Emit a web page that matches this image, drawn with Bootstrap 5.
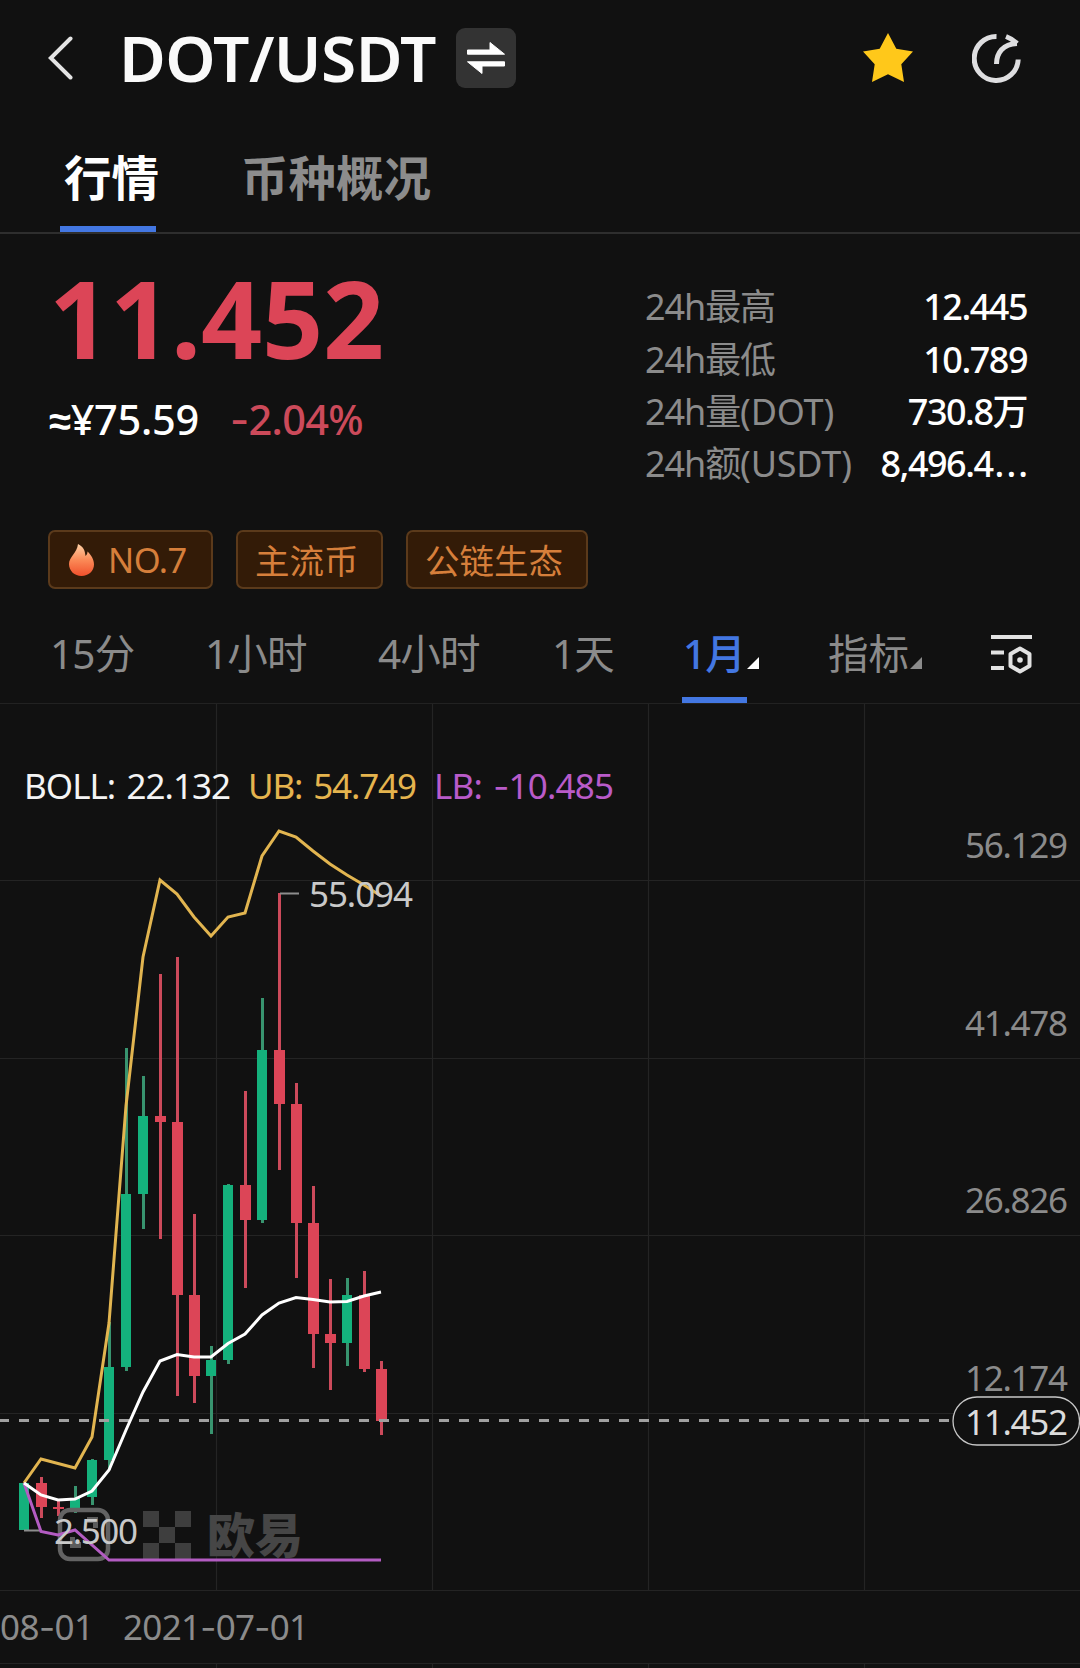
<!DOCTYPE html>
<html lang="zh-CN" data-bs-theme="dark">
<head>
<meta charset="utf-8">
<meta name="viewport" content="width=device-width, initial-scale=1">
<title>DOT/USDT</title>
<link rel="stylesheet" href="https://cdn.jsdelivr.net/npm/bootstrap@5.3.0/dist/css/bootstrap.min.css">
<style>
body{background:#111;color:#fff;font-family:"Noto Sans","Noto Sans CJK SC",sans-serif;width:1080px;height:1668px;overflow:hidden}
svg{display:block;flex:none}
.topbar{height:116px;padding-left:48px;padding-right:59px}
.pair{font-size:64px;font-weight:600;line-height:80px;letter-spacing:-.6px;margin:0 0 0 46px;width:321px;white-space:nowrap;color:#fafafa}
.swap{width:60px;height:60px;background:#333;border-radius:9px;margin-left:16px}
.star{margin-left:auto;margin-right:59px}
.maintabs{height:118px;border-bottom:2px solid #2e2e2e;padding-left:60px;--bs-nav-link-padding-x:0;flex-wrap:nowrap}
.maintabs .nav-link{font-size:47.500px;font-weight:700;line-height:60px;color:#8c8c8c;padding:31.500px 0 0 4px;height:116px;white-space:nowrap}
.maintabs .nav-link.active{color:#fff;border-bottom:6px solid #4377e2;width:96px;margin-right:81px}
.quote{height:296px;padding:0 53px 0 49px}
.last{font-size:107px;font-weight:700;line-height:120px;color:#dc4557;margin-top:24px;letter-spacing:-.2px}
.sub{font-size:41.500px;font-weight:500;line-height:50px;margin-top:16px;white-space:nowrap}
.fiat{letter-spacing:-.3px;width:181px}
.approx{font:700 40px/50px "Liberation Sans",sans-serif}
.chg{color:#cc4a5a;letter-spacing:-.7px}
.dash{font-family:Inter,sans-serif}
.stats{width:382px;margin-top:47px;font-size:36px;line-height:52.700px;white-space:nowrap}
.stats div:last-child{line-height:49px}
.stats dt{font-weight:400;color:#8b8b8b;letter-spacing:-1.100px}
.stats dt span{letter-spacing:-.2px}
.stats dd{font-weight:500;margin:0;letter-spacing:-1.500px}
.stats dd span{letter-spacing:2px;margin-left:2px;margin-right:-3px}
.tags{padding-left:48px;gap:23px}
.chip{height:59px;border:2px solid #5b3a1b;border-radius:7px;background:#331b07;color:#d67f3b;font-size:34.500px;line-height:58px;padding:0 17px;white-space:nowrap}
.periods{height:115px;border-bottom:1px solid #222;padding:25px 48px 0 50px;font-size:40.500px;line-height:80px;color:#8b8b8b;letter-spacing:-.8px;white-space:nowrap}
.period{height:89px;display:flex}
.period.on{color:#4377e2;font-weight:500;width:65px;border-bottom:6px solid #4377e2;padding-left:1px}
.corner{margin-top:43px}
.plot text{font-family:"Noto Sans","Noto Sans CJK SC",sans-serif;font-size:35px}
</style>
<script src="https://cdn.jsdelivr.net/npm/bootstrap@5.3.0/dist/js/bootstrap.bundle.min.js"></script>
</head>
<body>
<header class="topbar d-flex align-items-center">
  <svg width="25" height="46" viewBox="0 0 25 46" fill="none" stroke="#e4e4e4" stroke-width="4"><path d="M22.500 3.500 2.800 23l19.700 19.500" stroke-linecap="round"/></svg>
  <h1 class="pair">DOT/USDT</h1>
  <div class="swap d-flex align-items-center justify-content-center">
    <svg width="40" height="36" viewBox="0 0 40 36" fill="#fff" stroke="#fff" stroke-linejoin="round"><path d="M1.500 10H24V2.500L38.500 14.200H1.500zM38.500 21.800H1.500L16 33.500V26H38.500z"/></svg>
  </div>
  <svg class="star" width="50" height="50" viewBox="0 0 50 50" fill="#ffc81a"><path d="M25 0l8.300 15.800L50 18.500 38.300 31.200 41 49 25 41.300 9 49l2.700-17.800L0 18.500l16.700-2.700z"/></svg>
  <svg width="49" height="50" viewBox="0 0 49 50" fill="none" stroke="#dedee0" stroke-width="5"><path d="M24.500 3.500A22 22 0 1 0 46.200 26.500M24.500 31C24.500 20 31 11 45 10.500M34 3.500C38 5 41.500 7 45 10.500"/></svg>
</header>
<nav class="maintabs nav">
  <a class="nav-link active">行情</a>
  <a class="nav-link">币种概况</a>
</nav>
<section class="quote d-flex justify-content-between">
  <div>
    <div class="last">11.452</div>
    <div class="sub d-flex"><span class="fiat"><span class="approx">≈</span>¥75.59</span><span class="chg"><span class="dash">-</span>2.04%</span></div>
  </div>
  <dl class="stats mb-0">
    <div class="d-flex justify-content-between"><dt>24h最高</dt><dd>12.445</dd></div>
    <div class="d-flex justify-content-between"><dt>24h最低</dt><dd>10.789</dd></div>
    <div class="d-flex justify-content-between"><dt>24h量<span>(DOT)</span></dt><dd>730.8万</dd></div>
    <div class="d-flex justify-content-between"><dt>24h额<span>(USDT)</span></dt><dd>8,496.4<span>...</span></dd></div>
  </dl>
</section>
<section class="tags d-flex">
  <span class="chip d-flex align-items-center" style="width:165px;padding-left:19px">
    <svg width="25" height="32" viewBox="0 0 25 32"><defs><linearGradient id="fl" x1="0" y1="0" x2="0" y2="1"><stop offset="0" stop-color="#ffd0a4"/><stop offset=".5" stop-color="#fb8a57"/><stop offset="1" stop-color="#f0502c"/></linearGradient></defs><path fill="url(#fl)" d="M9 0C15 3 16 7 16.500 12 18 11 18.500 9 18.500 7.500 22 11 25 15 25 20.500 25 27 19.500 32 12.500 32S0 27 0 20C0 13 8 9 9 0z"/></svg>
    <span style="margin-left:14px;letter-spacing:-.5px">NO.7</span>
  </span>
  <span class="chip" style="width:147px">主流币</span>
  <span class="chip ms-0" style="width:182px">公链生态</span>
</section>
<nav class="periods d-flex">
  <div class="period" style="width:155px">15分</div>
  <div class="period" style="width:173px">1小时</div>
  <div class="period" style="width:174px">4小时</div>
  <div class="period" style="width:130px">1天</div>
  <div class="period on">1月</div>
  <svg class="corner" width="12" height="12"><path d="M12 0V12H0z" fill="#fff"/></svg>
  <div class="period" style="margin-left:69px;width:82px;letter-spacing:0">指标</div>
  <svg class="corner" width="12" height="12"><path d="M12 0V12H0z" fill="#8b8b8b"/></svg>
  <svg class="ms-auto" style="margin-top:20px" width="41" height="40" viewBox="0 0 41 40" fill="none" stroke="#e2e2e2" stroke-width="4"><path d="M0 3H41M0 18.500H13M0 34H13"/><path d="M29 14.500 38.500 20V32L29 37.500 19.500 32V20z" stroke-linejoin="round"/><circle cx="29" cy="26" r="2.800" fill="#e2e2e2" stroke="none"/></svg>
</nav>
<svg class="plot" width="1080" height="964" viewBox="0 704 1080 964">
  <path stroke="#242424" stroke-width="1.200" d="M216.500 704V1590M432.500 704V1590M648.500 704V1590M864.500 704V1590M0 880.500H1080M0 1058.500H1080M0 1235.500H1080M0 1413.500H1080M0 1590.500H1080M0 1663.500H1080M216.500 1664V1668M432.500 1664V1668M648.500 1664V1668M864.500 1664V1668"/>
  <g fill="#fff" style="word-spacing:3px">
    <text x="24" y="799" textLength="207" fill="#f4f4f4">BOLL: 22.132</text>
    <text x="248" y="799" textLength="169" fill="#e5b44e">UB: 54.749</text>
    <text x="434" y="799" textLength="180" fill="#b95bc9">LB: <tspan font-family="Inter">-</tspan>10.485</text>
  </g>
  <g id="candles"></g>
  <path d="M280 893.500H299M24 1530.500H40" stroke="#8d8d8d" stroke-width="2"/>
  <rect x="60" y="1510" width="48" height="49" rx="10" fill="none" stroke="#636363" stroke-width="4.500"/>
  <path d="M70 1537h5v5h6v6H70zM98 1528h-5v-5h-6v-6h11z" fill="#5c5c5c"/>
  <path fill="#3e3e3e" d="M143 1511h16v16h-16zM175 1511h16v16h-16zM159 1527h16v16h-16zM143 1543h16v16h-16zM175 1543h16v16h-16z"/>
  <text x="207" y="1553" textLength="96" style="font-size:48px;font-weight:900;font-family:'Noto Sans CJK SC',sans-serif" fill="#464646">欧易</text>
  <path d="M-1 1420.500H952" stroke="#a0a0a0" stroke-width="2.800" stroke-dasharray="10 10"/>
  <g fill="none" stroke-width="3">
    <path stroke="#e2b550" d="M24 1483 41 1459 75 1468 92 1437 109 1323 126 1106 143 957 160 880 177 894 194 917 211 936 228 917 245 913 262 856 279 831 296 837 313 851 330 864 347 875 364 885 381 896"/>
    <path stroke="#b35cc2" d="M24 1483 41 1531.500 58 1535 75 1530 109 1560H381"/>
    <path stroke="#fff" d="M24 1483 41 1495 58 1500 75 1499 92 1491 109 1470 126 1430 143 1392 160 1361 177 1354.500 194 1357H211L228 1343.500 245 1334 262 1315 279 1303 296 1297.500 313 1299.500 330 1302 347 1301.500 364 1296 381 1292"/>
  </g>
  <g fill="#c9c9c9">
    <text x="309" y="907" textLength="104">55.094</text>
    <text x="54" y="1543.500" textLength="84">2.500</text>
  </g>
  <rect x="953" y="1397" width="126.500" height="48" rx="24" fill="#111" stroke="#c8c8c8" stroke-width="1.300"/>
  <g fill="#8b8b8b">
    <text x="965" y="858" textLength="103">56.129</text>
    <text x="965" y="1036" textLength="103">41.478</text>
    <text x="965" y="1213" textLength="103">26.826</text>
    <text x="965" y="1391" textLength="103">12.174</text>
    <text x="965" y="1435" textLength="103" fill="#dcdcdc">11.452</text>
    <text x="0" y="1640" textLength="94">08<tspan font-family="Inter">-</tspan>01</text>
    <text x="123" y="1640" textLength="186">2021<tspan font-family="Inter">-</tspan>07<tspan font-family="Inter">-</tspan>01</text>
  </g>
</svg>
<script>
// one entry per month: [rising, body top, body bottom, high, low]
const months=[[1,1483,1530,1483,1530],[0,1483,1507,1477,1518],[0,1507,1509,1500,1516],[1,1498,1511,1486,1513],[1,1460,1497,1459,1505],[1,1367,1460,1322,1470],[1,1194,1367,1048,1371],[1,1116,1194,1076,1229],[0,1116,1122,974,1239],[0,1122,1295,957,1396],[0,1295,1376,1214,1403],[1,1360,1376,1346,1434],[1,1185,1360,1184,1364],[0,1185,1220,1091,1288],[1,1050,1220,998,1223],[0,1050,1104,893,1170],[0,1104,1223,1083,1278],[0,1223,1334,1186,1368],[0,1334,1343,1279,1390],[1,1295,1343,1278,1366],[0,1295,1369,1271,1372],[0,1369,1421,1361,1435]];
document.getElementById('candles').innerHTML=months.map(([up,t,b,h,l],i)=>{
  const x=19+17*i;
  return `<rect x="${x+4}" y="${h}" width="3" height="${l-h}" fill="${up?'#38946f':'#cc4a5b'}"/><rect x="${x}" y="${t}" width="${up?10:11}" height="${b-t}" fill="${up?'#14b17c':'#dc4557'}"/>`;
}).join('');
</script>
</body>
</html>
